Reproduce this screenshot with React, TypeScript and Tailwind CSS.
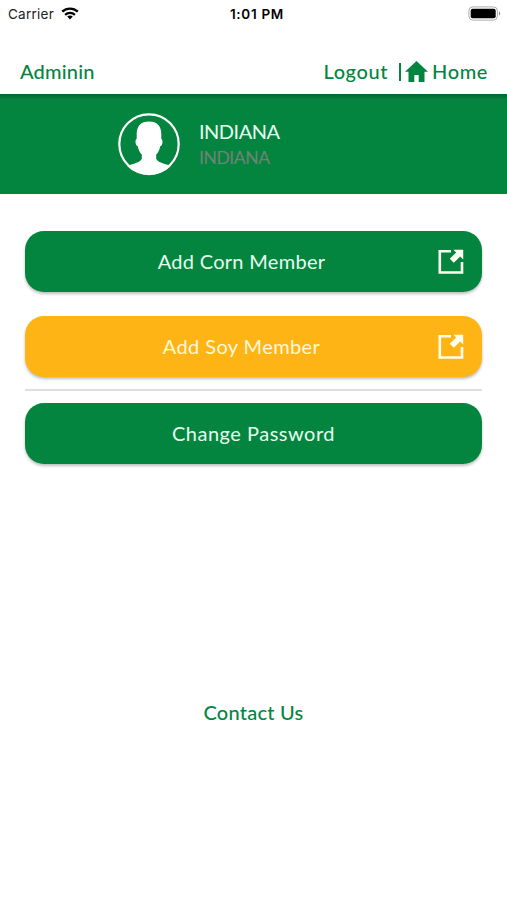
import React from "react";

function OpenIcon() {
  return (
    <svg className="h-[26px] w-[26px]" viewBox="0 0 26 26" fill="none">
      <path d="M13 2.300H1.800V23.500H24V13" stroke="#fffff0" strokeWidth="2.6" />
      <path d="M15.500.7h9.700v9.700l-3-3-6.400 6.400-4-4 6.400-6.400z" fill="#fffff0" />
    </svg>
  );
}

function ActionButton({ label, tone, icon, spacing }: { label: string; tone: string; icon?: boolean; spacing: string }) {
  return (
    <button className={`flex h-[61px] w-full shrink-0 items-center rounded-[19px] text-[20px] leading-6 shadow-[0_2px_3px_rgba(0,0,0,0.26)] ${tone}`}>
      <span className={`flex-1 pb-[1px] text-center whitespace-nowrap ${icon ? "pl-5" : ""} ${spacing}`}>{label}</span>
      {icon && (
        <span className="w-11">
          <OpenIcon />
        </span>
      )}
    </button>
  );
}

export default function App() {
  return (
    <div className="flex h-[900px] w-[507px] flex-col overflow-hidden bg-white font-['Lato',sans-serif] text-[#04853f]">
      <div className="grid h-7 shrink-0 grid-cols-3 items-center pr-[6px] pl-[8px] font-['Inter',sans-serif] text-[13.5px] text-[#222]">
        <div className="flex items-center gap-[7px]">
          <span className="tracking-[0.25px]">Carrier</span>
          <svg className="-mt-[1px] h-[13px] w-[18px]" viewBox="0 0 18 13" fill="none" stroke="#000" strokeWidth="2.3">
            <path d="M1.200 4.700c4.400-4.200 11.200-4.200 15.600 0M4.100 7.800c2.800-2.600 7-2.600 9.800 0" />
            <path d="M6.200 9.500c1.600-1.500 4-1.500 5.600 0L9 12.400z" fill="#000" stroke="none" />
          </svg>
        </div>
        <span className="pl-[5px] text-center font-semibold tracking-[0.7px] whitespace-nowrap text-black">1:01 PM</span>
        <svg className="-mt-[2px] h-[15px] w-[33px] justify-self-end" viewBox="0 0 33 15" fill="none">
          <rect x=".9" y=".9" width="28.5" height="13.2" rx="4" stroke="#aaa" />
          <rect x="2.7" y="2.7" width="25" height="9.6" rx="2" fill="#000" />
          <path d="M31 5.500v4c1.600-.6 1.600-3.400 0-4" fill="#888" />
        </svg>
      </div>

      <div className="flex h-[66px] shrink-0 items-start justify-between pt-[31px] pr-[19px] pl-5 text-[20px] leading-6 font-medium">
        <span className="tracking-[0.2px]">Adminin</span>
        <div className="flex items-start">
          <span className="tracking-[0.6px]">Logout</span>
          <span className="mt-[4px] ml-[11px] h-[18px] w-[2px] bg-[#04853f]" />
          <svg className="mt-[2px] ml-[4px] h-[22px] w-[23px]" viewBox="0 0 23 22" fill="#04853f">
            <path d="M11.500 0 0 10.700h3.500V21h5.800v-7h4.400v7h5.800V10.700H23z" />
          </svg>
          <span className="ml-[4px] tracking-[0.6px]">Home</span>
        </div>
      </div>

      <div className="flex h-[100px] shrink-0 bg-[#04853f] bg-[linear-gradient(to_bottom,rgba(0,0,0,0.25),transparent_6px)] pt-[18px] pl-[117px]">
        <svg className="h-16 w-16" viewBox="0 0 64 64">
          <circle cx="32" cy="32" r="29.700" fill="none" stroke="#fff" strokeWidth="2.200" />
          <path
            fill="#fff"
            d="M32 9.500c8 0 12.300 4.500 12.300 12.800v4.700c2 .4 1.400 6.800-1.100 7.300-.6 3.600-2 6.300-4 8.200v4.500c3 4.500 9.500 4.500 14.500 7.200A30.700 30.700 0 0 1 10.300 54.200c5-2.700 11.500-2.700 14.500-7.200v-4.500c-2-1.900-3.400-4.600-4-8.200-2.500-.5-3.100-6.900-1.100-7.300v-4.700C19.700 14 24 9.500 32 9.500z"
          />
        </svg>
        <div className="ml-[18px] flex flex-col pt-[7px]">
          <span className="text-[20px] leading-6 tracking-[-0.5px] text-[#e5ffef]">INDIANA</span>
          <span className="mt-[3px] text-[17.5px] leading-6 tracking-[-0.4px] text-[#738177]">INDIANA</span>
        </div>
      </div>

      <div className="flex shrink-0 flex-col px-[25px] pt-[37px]">
        <ActionButton label="Add Corn Member" tone="bg-[#04853f] text-[#e5ffef]" spacing="tracking-[0.3px]" icon />
        <div className="h-6" />
        <ActionButton label="Add Soy Member" tone="bg-[#ffb416] text-[#fff8dc]" spacing="tracking-[0.4px]" icon />
        <div className="mt-3 mb-3 h-[2px] bg-[#dedede]" />
        <ActionButton label="Change Password" tone="bg-[#04853f] text-[#e5ffef]" spacing="tracking-[0.5px]" />
      </div>
      <div className="mt-[236px] text-center text-[20px] leading-6 font-medium tracking-[0.25px]">Contact Us</div>
    </div>
  );
}
